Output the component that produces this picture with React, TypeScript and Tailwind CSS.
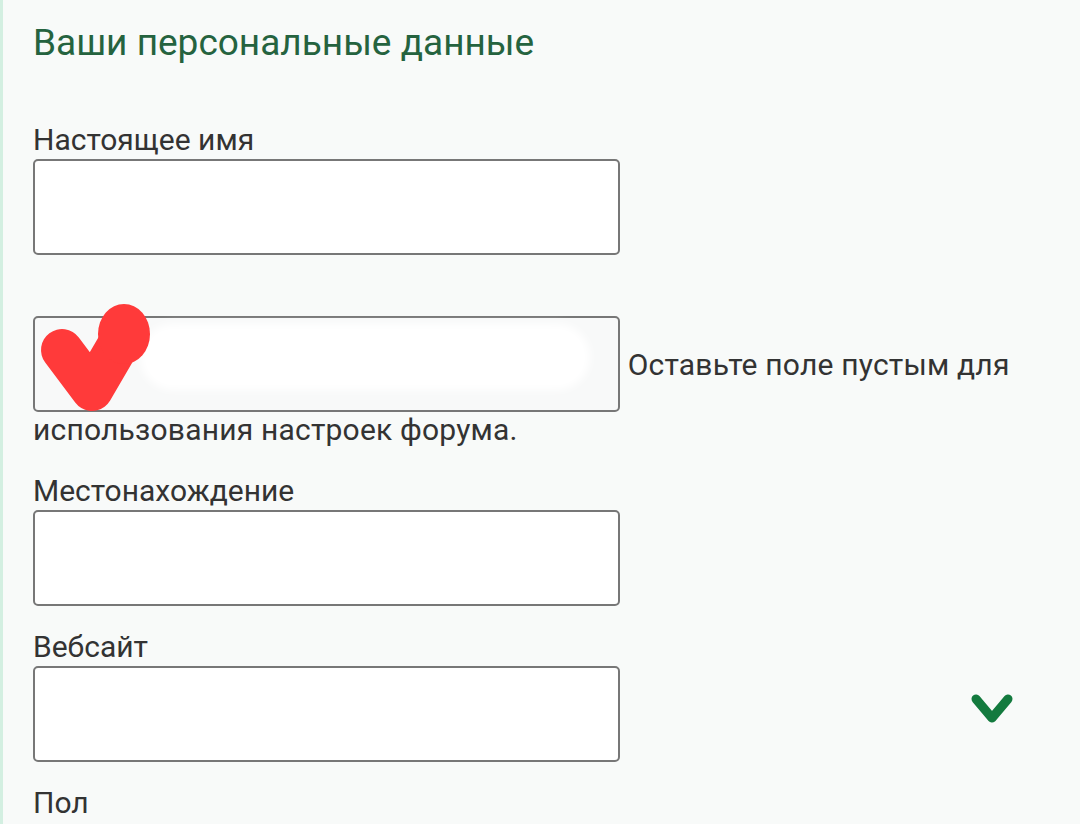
import React from 'react'

const font = { fontFamily: 'Roboto, "Noto Sans", sans-serif' }

function Field({ label, className = '' }: { label: string; className?: string }) {
  return (
    <div className={className}>
      <div className="text-[30px] leading-[36px] text-[#333]">{label}</div>
      <input
        type="text"
        className="mt-[1px] block h-[96px] w-[587px] rounded-[5px] border-2 border-[#777] bg-white outline-none"
      />
    </div>
  )
}

export default function App() {
  return (
    <div
      className="relative min-h-[824px] w-[1080px] border-l-[3px] border-[#d3efe1] bg-[#f8faf9] pl-[30px] pr-[40px] pt-[21px]"
      style={font}
    >
      <h2 className="text-[37px] leading-[44px] font-normal text-[#25633f]">Ваши персональные данные</h2>

      <Field label="Настоящее имя" className="mt-[57px]" />

      {/* signature field, text flows beside it */}
      <div className="relative mt-[61px] text-[30px] leading-[36px] tracking-[0.2px] text-[#333]">
        <span className="relative inline-block h-[96px] w-[587px] rounded-[5px] border-2 border-[#777] bg-[#f8f9f9] align-[-37px]">
          <span className="absolute left-[105px] top-[6px] h-[66px] w-[450px] rounded-full bg-white blur-[4px]" />
        </span>{' '}
        Оставьте поле пустым для использования настроек форума.
        <svg className="absolute left-[-33px] top-[-18px]" width="200" height="130" viewBox="0 0 200 130">
          <path d="M62 52 L92 92 L120 44" fill="none" stroke="#ff3a3a" strokeWidth="42" strokeLinecap="round" strokeLinejoin="round" />
          <ellipse cx="124" cy="36" rx="26" ry="30" fill="#ff3a3a" />
        </svg>
      </div>

      <Field label="Местонахождение" className="mt-[25px]" />
      <Field label="Вебсайт" className="mt-[23px]" />

      <div className="mt-[23px] text-[30px] leading-[36px] text-[#333]">Пол</div>

      <svg className="absolute left-[965px] top-[689px]" width="48" height="40" viewBox="0 0 48 40">
        <path d="M8 10 L24 29 L40 10" fill="none" stroke="#137a3e" strokeWidth="9" strokeLinecap="round" strokeLinejoin="round" />
      </svg>
    </div>
  )
}
